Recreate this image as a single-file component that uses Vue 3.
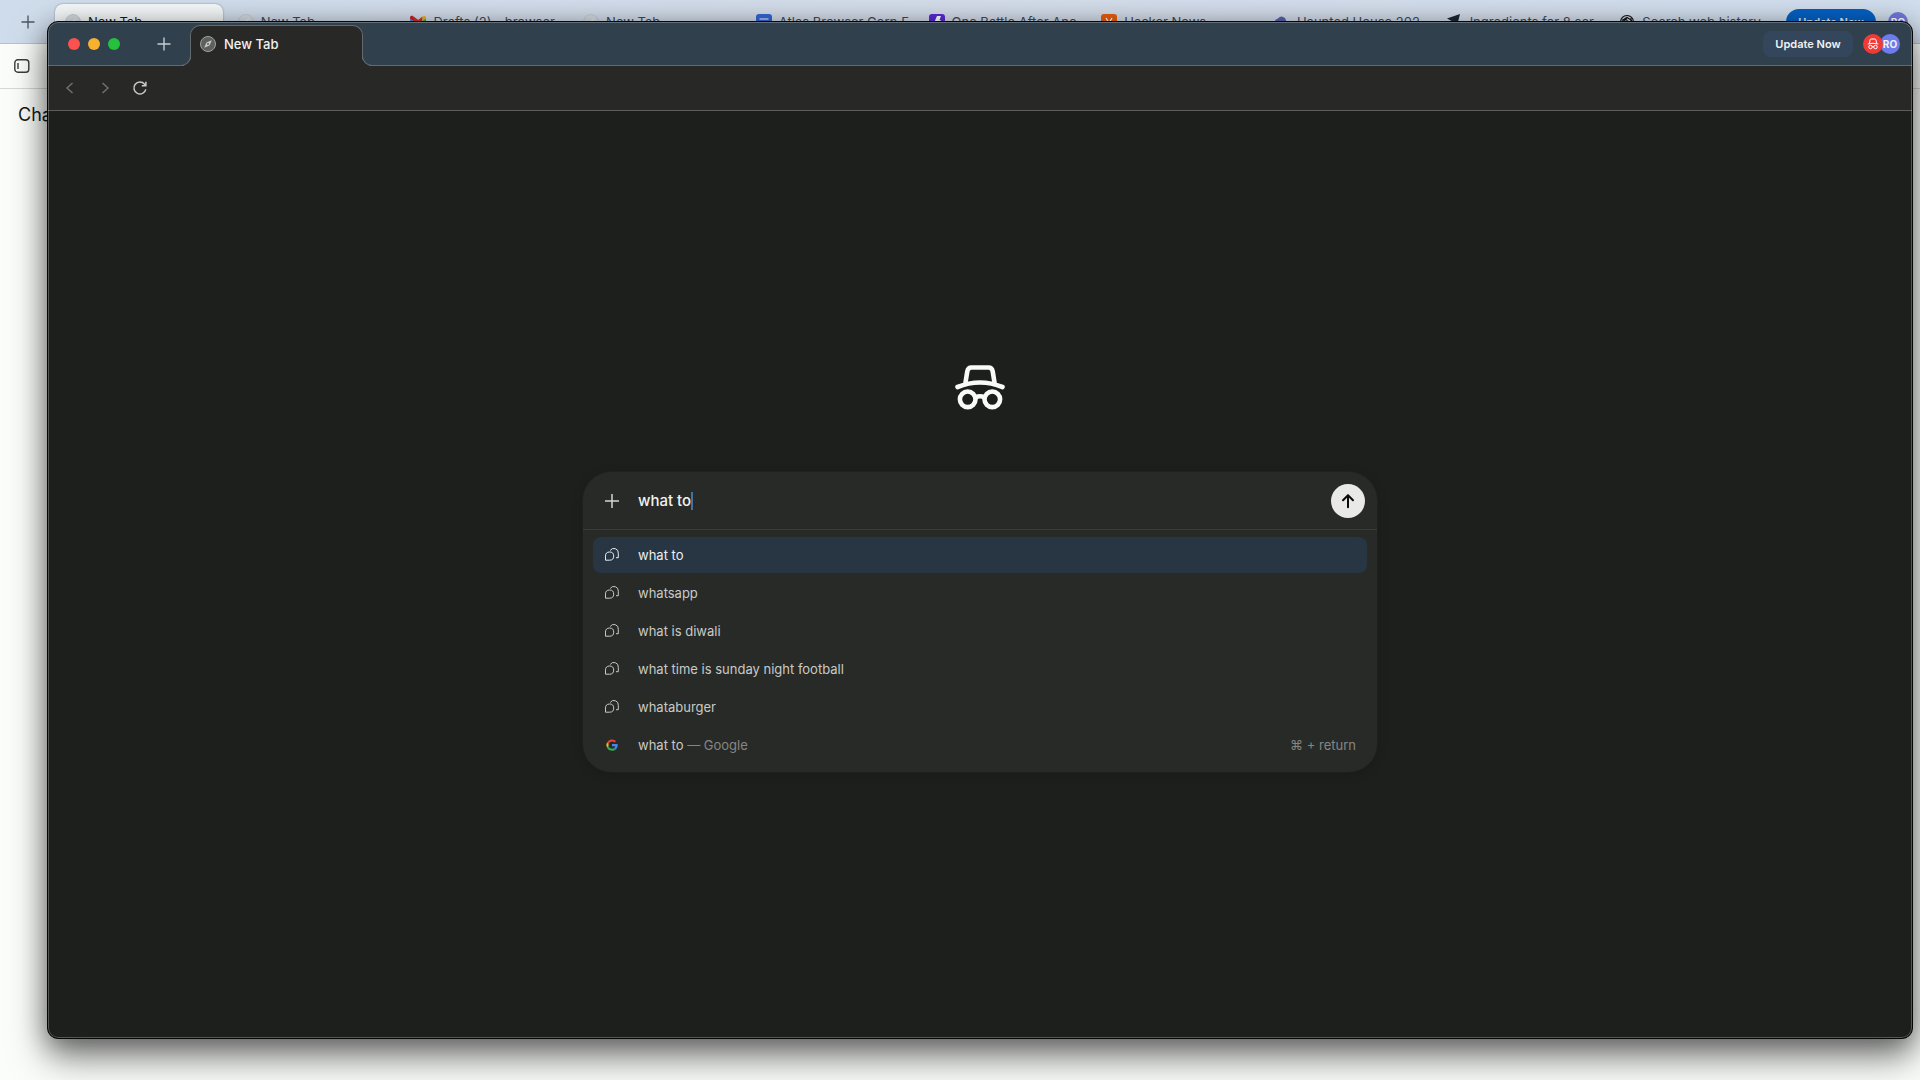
<template>
  <div class="desktop">
    <div class="back-window">
      <div class="back-tabs">
        <button class="back-plus" aria-label="New tab">
          <svg width="14" height="14" viewBox="0 0 14 14"><path d="M7 0.5v13M0.5 7h13" /></svg>
        </button>
        <div class="back-strip">
          <a
            v-for="(tab, index) in backTabs"
            :key="index"
            href="#"
            class="back-tab"
            :class="{ 'back-tab-active': index === 0 }"
          >
            <svg class="favicon" viewBox="0 0 16 16">
              <template v-if="tab.icon === 'compass'">
                <circle cx="8" cy="8" r="7.5" fill="#d3dae1" stroke="#c3cad2" />
                <path d="M11.5 4.5 9.2 9.2 4.5 11.5 6.8 6.8z" fill="#e6eaee" />
              </template>
              <template v-else-if="tab.icon === 'mail'">
                <path d="M0 4v10h3.5V7z" fill="#4285f4" />
                <path d="M12.5 7v7H16V4z" fill="#34a853" />
                <path d="M0 4.500V3.500C0 2 2 1.300 3 2.200L8 6v4.300z" fill="#c5221f" />
                <path d="M3.500 2.600 8 6l4.500-3.400V7L8 10.300 3.500 7z" fill="#d93025" />
                <path d="M12.500 2.600C14 1.300 16 2 16 3.500v1L12.500 7z" fill="#e3b51a" />
              </template>
              <template v-else-if="tab.icon === 'docs'">
                <rect width="16" height="16" rx="3" fill="#3367d6" />
                <path d="M3.500 5h9M3.500 8.500h9M3.500 11.500h6" stroke="#fff" stroke-width="1.200" />
              </template>
              <template v-else-if="tab.icon === 'flash'">
                <rect width="16" height="16" rx="3" fill="#5a28d6" />
                <path d="M8 2h4l-1.500 4H12l-6 8 1.500-5H5z" fill="#fff" />
              </template>
              <template v-else-if="tab.icon === 'hacker'">
                <rect width="16" height="16" rx="3" fill="#e85d0c" />
                <path d="M5 4l3 5 3-5M8 9v4" fill="none" stroke="#fff" stroke-width="1.400" />
              </template>
              <template v-else-if="tab.icon === 'ghost'">
                <path d="M1 6 4 4.500A4.500 4.500 0 0 1 12 6L13 13H4z" fill="#5a62b0" />
              </template>
              <template v-else-if="tab.icon === 'plane'">
                <path d="M0 4.500 13 0 9.500 14 5.500 7.500z" fill="#1b2733" />
              </template>
              <template v-else>
                <g fill="none" stroke="#111" stroke-width="1.200">
                  <circle cx="8" cy="8" r="6.500" />
                  <path d="M3 6.500 8 3.500l4.500 2.800v5M5 12V6.500l3-1.800M5 9l3 2 4-2.500V4M6 8l2-1.200 2 1.200v2l-2 1-2-1z" />
                </g>
              </template>
            </svg>
            <span class="back-title">{{ tab.title }}</span>
          </a>
        </div>
        <button class="back-update">Update Now</button>
        <span class="back-avatar">RO</span>
      </div>
      <div class="back-toolbar">
        <button class="sidebar-toggle" aria-label="Sidebar">
          <svg width="16" height="14" viewBox="0 0 16 14">
            <rect x="0.800" y="0.800" width="14" height="12.400" rx="3" />
            <path d="M4 4v6" />
          </svg>
        </button>
      </div>
      <p class="back-heading">Cha</p>
    </div>

    <div class="window">
      <header class="titlebar">
        <div class="lights">
          <button class="light light-close" aria-label="Close"></button>
          <button class="light light-min" aria-label="Minimize"></button>
          <button class="light light-max" aria-label="Zoom"></button>
        </div>
        <button class="new-tab" aria-label="New tab">
          <svg width="14" height="14" viewBox="0 0 14 14"><path d="M7 0.500v13M0.500 7h13" /></svg>
        </button>
        <a href="#" class="tab">
          <svg class="favicon" viewBox="0 0 16 16">
            <circle cx="8" cy="8" r="7.500" fill="#5d605e" stroke="#a2a5a3" />
            <path d="M11.800 4.200 9.500 9.500 4.200 11.800 6.500 6.500z" fill="#c9cccb" />
            <circle cx="8" cy="8" r="1" fill="#5d605e" />
          </svg>
          <span>New Tab</span>
        </a>
        <div class="account">
          <button class="update">Update Now</button>
          <div class="avatars">
            <span class="avatar avatar-incognito">
              <svg width="12" height="12" viewBox="0 0 48 48">
                <path d="M10 22 12 8q1-4 5-4h14q4 0 5 4l2 14M3 24q21-6 42 0" />
                <circle cx="14" cy="36" r="7" />
                <circle cx="34" cy="36" r="7" />
                <path d="M21 35q3-2 6 0" />
              </svg>
            </span>
            <span class="avatar avatar-user">RO</span>
          </div>
        </div>
      </header>

      <nav class="toolbar">
        <button aria-label="Back" class="dim">
          <svg width="16" height="16" viewBox="0 0 16 16"><path d="M10.500 3 5 8l5.500 5" /></svg>
        </button>
        <button aria-label="Forward" class="dim">
          <svg width="16" height="16" viewBox="0 0 16 16"><path d="M5.500 3 11 8l-5.500 5" /></svg>
        </button>
        <button aria-label="Reload">
          <svg width="16" height="16" viewBox="0 0 16 16">
            <path d="M13.800 9.300A6 6 0 1 1 12.600 4.200L13.800 5.600M13.900 1.700v4.100H9.800" />
          </svg>
        </button>
      </nav>

      <main class="content">
        <svg class="logo" viewBox="0 0 50 46">
          <path d="M10.500 17.500 12.300 6.300Q13 2.500 16.500 2.500h17q3.500 0 4.200 3.800L39.500 17.500" />
          <path d="M2.500 22Q25 13 47.500 22" />
          <circle cx="12.700" cy="34.300" r="7.800" />
          <circle cx="37.300" cy="34.300" r="7.800" />
          <path d="M20.500 32.500q4.500-2.400 9 0" />
        </svg>

        <div class="panel">
          <form class="prompt" @submit.prevent>
            <button type="button" class="attach" aria-label="Add">
              <svg width="16" height="16" viewBox="0 0 16 16"><path d="M8 1v14M1 8h14" /></svg>
            </button>
            <div class="field">
              <input v-model="query" type="text" aria-label="Search" />
              <i class="caret"></i>
            </div>
            <button class="send" aria-label="Send">
              <svg width="16" height="16" viewBox="0 0 16 16"><path d="M8 14.200V2.200M3 7.300 8 2.200l5 5.100" /></svg>
            </button>
          </form>
          <ul class="suggestions">
            <li v-for="(item, index) in suggestions" :key="index">
              <button class="suggestion" :class="{ selected: index === 0 }">
                <svg v-if="item.source" class="row-icon" viewBox="0 0 48 48">
                  <path d="M24 13.500c3 0 5.700 1 7.800 3l4.400-4.400A17 17 0 0 0 9 17l5 4c1.500-4.500 5.500-7.500 10-7.500z" fill="#ea4335" />
                  <path d="M14 21a11 11 0 0 0 0 6.500l-5.200 4.300a17.500 17.500 0 0 1 0-15z" fill="#fbbc05" />
                  <path d="M24 41.500c4.600 0 8.700-1.500 11.600-4.300l-5.300-4.300c-4.800 3.400-14 2.200-16.300-5.400l-5.400 4.300a17.500 17.500 0 0 0 15.400 9.700z" fill="#34a853" />
                  <path d="M41 20.800H24v7h9.600a8 8 0 0 1-3.400 5.200l5.400 4.200c4.300-4 6.300-9.600 5.400-16.400z" fill="#4285f4" />
                </svg>
                <svg v-else class="row-icon row-chat" viewBox="0 0 16 16">
                  <path d="M1.500 13.200V9.100A4.100 4.100 0 1 1 5.600 13.200z" />
                  <path d="M6.200 3.500A4.400 4.400 0 0 1 14.300 6.200V10.700H12" />
                </svg>
                <span>{{ item.text }}<em v-if="item.source"> — {{ item.source }}</em></span>
                <kbd v-if="item.shortcut">{{ item.shortcut }}</kbd>
              </button>
            </li>
          </ul>
        </div>
      </main>
    </div>
  </div>
</template>

<script setup>
import { ref } from 'vue'

const query = ref('what to')

const backTabs = [
  { title: 'New Tab', icon: 'compass' },
  { title: 'New Tab', icon: 'compass' },
  { title: 'Drafts (2) - browser', icon: 'mail' },
  { title: 'New Tab', icon: 'compass' },
  { title: 'Atlas Browser Corp F', icon: 'docs' },
  { title: 'One Battle After Ano', icon: 'flash' },
  { title: 'Hacker News', icon: 'hacker' },
  { title: 'Haunted House 202', icon: 'ghost' },
  { title: 'Ingredients for 8 ser', icon: 'plane' },
  { title: 'Search web history', icon: 'chat' }
]

const suggestions = [
  { text: 'what to' },
  { text: 'whatsapp' },
  { text: 'what is diwali' },
  { text: 'what time is sunday night football' },
  { text: 'whataburger' },
  { text: 'what to', source: 'Google', shortcut: '⌘ + return' }
]
</script>

<style>
body {
  background: #fbfdfa;
}
</style>

<style scoped>
.desktop {
  position: relative;
  min-height: 100vh;
  overflow: hidden;
  font-family: Inter, "Liberation Sans", sans-serif;
  font-size: 13px;
}

button {
  display: flex;
  align-items: center;
  justify-content: center;
  padding: 0;
  border: none;
  background: none;
  color: inherit;
  font: inherit;
}

a {
  color: inherit;
  text-decoration: none;
}

svg {
  display: block;
  flex: none;
}

.favicon {
  width: 16px;
  height: 16px;
}

/* window behind */
.back-tabs {
  display: flex;
  align-items: flex-start;
  box-sizing: border-box;
  height: 44px;
  padding: 4px 12px 0 0;
  background: linear-gradient(90deg, #cfdceb, #d3dbe8 50%, #d0ddec);
  border-bottom: 1px solid #b9c1ca;
}

.back-plus {
  width: 55px;
  height: 36px;
}

.back-plus path {
  stroke: #4b5560;
  stroke-width: 1.300;
}

.back-strip {
  display: flex;
  flex: 1;
  min-width: 0;
  margin-right: 4px;
}

.back-tab {
  display: flex;
  flex: 1;
  align-items: center;
  gap: 7px;
  box-sizing: border-box;
  min-width: 0;
  height: 36px;
  margin-right: 5px;
  padding: 0 2px 0 10px;
  border-radius: 8px;
  color: #3f4a55;
}

.back-tab-active {
  background: #f3f7f8;
  box-shadow: 0 0 2px rgba(0, 0, 0, 0.4);
  color: #1a1d1c;
}

.back-title {
  white-space: nowrap;
}

.back-update {
  width: 90px;
  height: 26px;
  margin-top: 5px;
  border-radius: 13px;
  background: #0561c3;
  color: #e6f0fb;
  font-size: 11px;
  font-weight: 600;
}

.back-avatar {
  width: 20px;
  margin: 8px 0 0 12px;
  border-radius: 50%;
  background: #7078dd;
  color: #fff;
  font-size: 10px;
  font-weight: 700;
  line-height: 20px;
  text-align: center;
}

.back-toolbar {
  display: flex;
  align-items: center;
  height: 44px;
  padding-left: 14px;
  border-bottom: 1px solid #d5d8d5;
}

.sidebar-toggle svg {
  fill: none;
  stroke: #3a3d3b;
  stroke-width: 1.400;
}

.back-heading {
  margin: 14px 18px;
  color: #161817;
  font-size: 18px;
  line-height: 24px;
}

/* incognito window */
.window {
  position: absolute;
  inset: 21px 7px 41px 47px;
  display: flex;
  flex-direction: column;
  box-sizing: border-box;
  border: 1px solid #050606;
  border-radius: 11px;
  overflow: hidden;
  background: #1d1f1c;
  box-shadow: 0 18px 36px rgba(0, 0, 0, 0.5), 0 4px 24px rgba(0, 0, 0, 0.3);
  color: #f1f2f0;
}

.window::after {
  content: '';
  position: absolute;
  inset: 0;
  border: 1px solid rgba(255, 255, 255, 0.25);
  border-radius: 10px;
  pointer-events: none;
}

.titlebar {
  display: flex;
  align-items: center;
  box-sizing: border-box;
  height: 44px;
  padding: 0 12px 0 20px;
  border-bottom: 1px solid #626a6d;
  background: #31404d;
}

.lights {
  display: flex;
  gap: 8px;
}

.light {
  width: 12px;
  height: 12px;
  border-radius: 50%;
}

.light-close {
  background: #f9524f;
}

.light-min {
  background: #f7b02f;
}

.light-max {
  background: #25c03d;
}

.new-tab {
  width: 28px;
  height: 28px;
  margin-left: 30px;
}

.new-tab path {
  stroke: #c5ced6;
  stroke-width: 1.400;
}

.tab {
  position: relative;
  display: flex;
  align-items: center;
  gap: 8px;
  align-self: flex-end;
  box-sizing: border-box;
  width: 173px;
  height: 41px;
  margin: 0 0 -1px 12px;
  padding: 0 9px 4px;
  border: 1px solid #626a6d;
  border-bottom: none;
  border-radius: 10px 10px 0 0;
  background: #282927;
  font-weight: 500;
}

/* flared feet of the active tab */
.tab::before,
.tab::after {
  content: '';
  position: absolute;
  bottom: 0;
  width: 9px;
  height: 9px;
}

.tab::before {
  right: 100%;
  border-right: 1px solid #626a6d;
  border-bottom: 1px solid #626a6d;
  border-bottom-right-radius: 10px;
  box-shadow: 3px 3px 0 #282927;
  clip-path: inset(0 -1px 0 0);
}

.tab::after {
  left: 100%;
  border-left: 1px solid #626a6d;
  border-bottom: 1px solid #626a6d;
  border-bottom-left-radius: 10px;
  box-shadow: -3px 3px 0 #282927;
  clip-path: inset(0 0 0 -1px);
}

.account {
  display: flex;
  align-items: center;
  gap: 10px;
  margin-left: auto;
}

.update {
  width: 90px;
  height: 26px;
  border-radius: 8px;
  background: #34465c;
  font-size: 11px;
  font-weight: 600;
}

.avatars {
  display: flex;
}

.avatar {
  display: flex;
  align-items: center;
  justify-content: center;
  width: 20px;
  height: 20px;
  border-radius: 50%;
  font-size: 10px;
  font-weight: 700;
}

.avatar-incognito {
  z-index: 1;
  background: #f03a36;
}

.avatar-incognito svg {
  fill: none;
  stroke: #fff;
  stroke-width: 4;
}

.avatar-user {
  margin-left: -3px;
  background: #6d7ceb;
}

.toolbar {
  display: flex;
  align-items: center;
  gap: 19px;
  box-sizing: border-box;
  height: 45px;
  padding-left: 14px;
  border-bottom: 1px solid #5d5e5c;
  background: #282927;
}

.toolbar svg {
  fill: none;
  stroke: #c9cac8;
  stroke-width: 1.500;
}

.toolbar .dim svg {
  stroke: #6f706e;
}

.content {
  display: flex;
  flex: 1;
  flex-direction: column;
  align-items: center;
  padding: 254px 24px 24px;
}

.logo {
  width: 50px;
  height: 46px;
  fill: none;
  stroke: #fafbf9;
  stroke-width: 4.600;
  stroke-linecap: round;
  stroke-linejoin: round;
}

.panel {
  box-sizing: border-box;
  width: 100%;
  max-width: 794px;
  margin-top: 61px;
  border-radius: 28px;
  background: #282a27;
  box-shadow: 0 0 0 1px rgba(255, 255, 255, 0.02), 0 2px 12px rgba(0, 0, 0, 0.15);
}

.prompt {
  display: flex;
  align-items: center;
  box-sizing: border-box;
  height: 58px;
  padding: 0 12px 0 21px;
  border-bottom: 1px solid #3a3c39;
}

.attach svg {
  fill: none;
  stroke: #d4d5d3;
  stroke-width: 1.500;
}

.field {
  display: flex;
  flex: 1;
  align-items: center;
  min-width: 0;
  margin-left: 18px;
}

.field input {
  field-sizing: content;
  padding: 0;
  border: none;
  outline: none;
  background: none;
  color: #f1f2f0;
  font: inherit;
  font-size: 15px;
  font-weight: 500;
}

.caret {
  width: 2px;
  height: 18px;
  background: #44719f;
}

.send {
  width: 34px;
  height: 34px;
  border-radius: 50%;
  background: #e9eae7;
}

.send svg {
  fill: none;
  stroke: #0b0c0b;
  stroke-width: 2;
  stroke-linecap: round;
  stroke-linejoin: round;
}

.suggestions {
  display: flex;
  flex-direction: column;
  gap: 2px;
  margin: 0;
  padding: 7px 10px 9px;
  list-style: none;
}

.suggestion {
  justify-content: flex-start;
  gap: 18px;
  width: 100%;
  height: 36px;
  padding: 0 11px;
  border-radius: 8px;
  color: #c9cac8;
}

.suggestion.selected {
  background: #283644;
  color: #e9eef2;
}

.row-icon {
  width: 16px;
  height: 16px;
}

.row-chat {
  fill: none;
  stroke: currentColor;
}

.suggestion em {
  color: #858684;
  font-style: normal;
}

.suggestion kbd {
  margin-left: auto;
  color: #858684;
  font: inherit;
}
</style>
